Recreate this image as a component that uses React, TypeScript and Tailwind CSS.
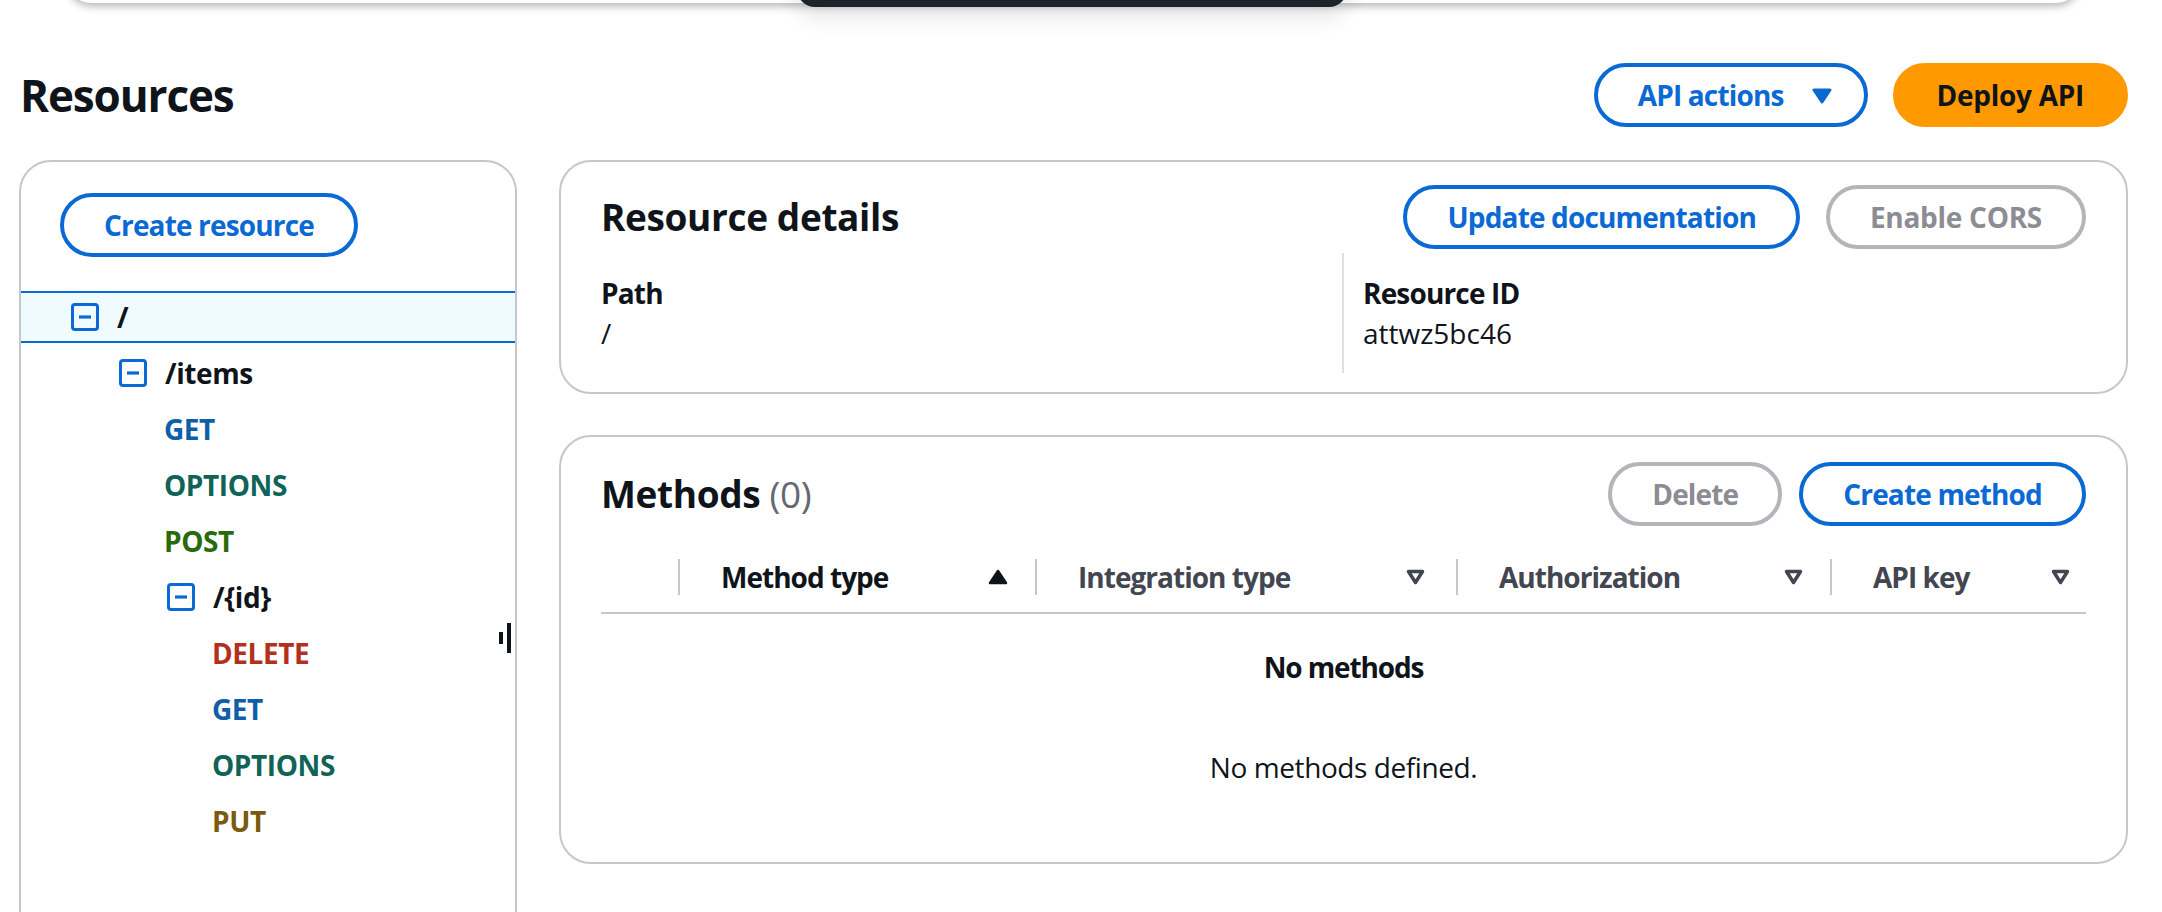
import React from 'react'

type TreeNode = {
    label: string
    depth: number
    expandable?: boolean
    selected?: boolean
    color?: string
}

const tree: TreeNode[] = [
    { label: '/', depth: 0, expandable: true, selected: true },
    { label: '/items', depth: 1, expandable: true },
    { label: 'GET', depth: 2, color: 'text-[#0f5ea8]' },
    { label: 'OPTIONS', depth: 2, color: 'text-[#0f6357]' },
    { label: 'POST', depth: 2, color: 'text-[#2a690c]' },
    { label: '/{id}', depth: 2, expandable: true },
    { label: 'DELETE', depth: 3, color: 'text-[#b2311c]' },
    { label: 'GET', depth: 3, color: 'text-[#0f5ea8]' },
    { label: 'OPTIONS', depth: 3, color: 'text-[#0f6357]' },
    { label: 'PUT', depth: 3, color: 'text-[#7a5a0e]' },
]

const columns = [
    { label: 'Method type', width: 'w-[357px]', sorted: true, pr: 'pr-[27px]' },
    { label: 'Integration type', width: 'w-[421px]', sorted: false, pr: 'pr-[31px]' },
    { label: 'Authorization', width: 'w-[374px]', sorted: false, pr: 'pr-[27px]' },
    { label: 'API key', width: 'flex-1', sorted: false, pr: 'pr-[16px]' },
]

function CollapseIcon() {
    return (
        <svg width="28" height="28" viewBox="0 0 28 28" className="shrink-0">
            <rect x="1.5" y="1.5" width="25" height="25" rx="2.5" fill="none" stroke="#0b69d4" strokeWidth="3" />
            <line x1="8" y1="14" x2="20" y2="14" stroke="#0b69d4" strokeWidth="3.2" />
        </svg>
    )
}

function CaretUpFilled() {
    return (
        <svg width="20" height="16" viewBox="0 0 20 16">
            <path d="M2 14 L10 2 L18 14 Z" fill="#0f141a" stroke="#0f141a" strokeWidth="2.5" strokeLinejoin="round" />
        </svg>
    )
}

function CaretDownOutline() {
    return (
        <svg width="19" height="16" viewBox="0 0 19 16">
            <path d="M2.5 2.5 L16.5 2.5 L9.5 13.5 Z" fill="none" stroke="#424650" strokeWidth="3.5" strokeLinejoin="round" />
        </svg>
    )
}

function CaretDownFilled() {
    return (
        <svg width="22" height="17" viewBox="0 0 22 17">
            <path d="M3 3 L19 3 L11 15 Z" fill="#0b69d4" stroke="#0b69d4" strokeWidth="3" strokeLinejoin="round" />
        </svg>
    )
}

function Button({ children, variant = 'normal', className = '' }: { children: React.ReactNode; variant?: 'normal' | 'primary' | 'disabled'; className?: string }) {
    const styles = {
        normal: 'border-[#0b69d4] text-[#0b69d4] bg-white',
        primary: 'border-[#ff9900] bg-[#ff9900] text-[#0f141a]',
        disabled: 'border-[#b4b4bb] text-[#8c8c94] bg-white',
    }
    return (
        <button className={`h-[64px] rounded-full border-4 px-[40px] text-[28px] font-bold leading-[40px] whitespace-nowrap flex items-center ${styles[variant]} ${className}`}>
            {children}
        </button>
    )
}

export default function App() {
    return (
        <div className="relative h-[912px] overflow-hidden bg-white font-['Open_Sans',sans-serif] text-[#0f141a]">
            {/* floating toolbar cut off at the top of the viewport */}
            <div className="absolute left-[67px] top-[-60px] h-[63px] w-[2013px] rounded-[24px] bg-white shadow-[0_3px_8px_rgba(0,0,0,0.3)]" />
            <div className="absolute left-[797px] top-[-40px] h-[47px] w-[550px] rounded-b-[18px] bg-[#1f232c] shadow-[0_8px_24px_rgba(0,7,22,0.12)]" />

            <div className="pl-[19px] pr-[34px] pt-[63px]">
                <div className="flex h-[64px] items-center justify-between">
                    <h1 className="ml-[1px] text-[44px] font-bold leading-[60px] tracking-[-0.025em]">Resources</h1>
                    <div className="flex items-center gap-[25px]">
                        <Button className="pr-[31px] tracking-[-0.03em]">
                            API actions
                            <span className="ml-[27px] flex"><CaretDownFilled /></span>
                        </Button>
                        <Button variant="primary" className="tracking-[-0.01em]">Deploy API</Button>
                    </div>
                </div>

                <div className="mt-[33px] grid grid-cols-[498px_1fr] gap-[42px]">
                    {/* resource tree */}
                    <div className="relative h-[820px] rounded-[32px] border-2 border-[#c6c6cd]">
                        <div className="pl-[39px] pt-[31px]">
                            <Button className="tracking-[-0.03em]">Create resource</Button>
                        </div>
                        <div className="mt-[34px]">
                            {tree.map((node, i) => (
                                <div
                                    key={i}
                                    className={node.selected
                                        ? 'mb-[2px] flex h-[52px] items-center border-y-2 border-[#0b69d4] bg-[#f0fbff]'
                                        : 'flex h-[56px] items-center'}
                                    style={{ paddingLeft: 50 + node.depth * 48 - (node.expandable ? 0 : 3) }}
                                >
                                    {node.expandable && <CollapseIcon />}
                                    <span className={`text-[28px] font-bold leading-[40px] tracking-[-0.015em] ${node.expandable ? 'ml-[18px]' : ''} ${node.color ?? 'text-[#0f141a]'}`}>
                                        {node.label}
                                    </span>
                                </div>
                            ))}
                        </div>
                        {/* mouse cursor */}
                        <div className="absolute left-[478px] top-[470px] h-[12px] w-[4px] bg-[#0f141a]" />
                        <div className="absolute left-[486px] top-[461px] h-[30px] w-[4px] bg-[#0f141a]" />
                    </div>

                    <div className="flex flex-col gap-[41px]">
                        {/* resource details */}
                        <div className="rounded-[32px] border-2 border-[#c6c6cd] px-[40px] pb-[19px] pt-[23px]">
                            <div className="flex h-[64px] items-center justify-between">
                                <h2 className="text-[37px] font-bold leading-[48px] tracking-[-0.01em]">Resource details</h2>
                                <div className="flex gap-[26px]">
                                    <Button className="tracking-[-0.03em]">Update documentation</Button>
                                    <Button variant="disabled" className="tracking-[-0.01em]">Enable CORS</Button>
                                </div>
                            </div>
                            <div className="mt-[4px] grid grid-cols-[741px_1fr]">
                                <div className="py-[20px]">
                                    <div className="text-[28px] font-bold leading-[40px] tracking-[-0.03em]">Path</div>
                                    <div className="text-[28px] leading-[40px]">/</div>
                                </div>
                                <div className="border-l-2 border-[#dedee3] py-[20px] pl-[19px]">
                                    <div className="text-[28px] font-bold leading-[40px] tracking-[-0.03em]">Resource ID</div>
                                    <div className="text-[28px] leading-[40px]">attwz5bc46</div>
                                </div>
                            </div>
                        </div>

                        {/* methods */}
                        <div className="rounded-[32px] border-2 border-[#c6c6cd] px-[40px] pb-[75px] pt-[25px]">
                            <div className="flex h-[64px] items-center justify-between">
                                <h2 className="text-[37px] font-bold leading-[48px] tracking-[-0.01em]">
                                    Methods <span className="font-normal text-[#656871]">(0)</span>
                                </h2>
                                <div className="flex gap-[17px]">
                                    <Button variant="disabled" className="tracking-[-0.03em]">Delete</Button>
                                    <Button className="tracking-[-0.03em]">Create method</Button>
                                </div>
                            </div>

                            <div className="mt-[15px] flex h-[73px] items-center border-b-2 border-[#c6c6cd]">
                                <div className="w-[77px]" />
                                {columns.map(col => (
                                    <div key={col.label} className={`flex items-center ${col.width}`}>
                                        <span className="h-[36px] w-[2px] bg-[#c6c6cd]" />
                                        <div className={`flex flex-1 items-center justify-between pl-[41px] ${col.pr}`}>
                                            <span className={`text-[28px] font-bold leading-[40px] tracking-[-0.035em] ${col.sorted ? 'text-[#0f141a]' : 'text-[#424650]'}`}>
                                                {col.label}
                                            </span>
                                            {col.sorted ? <CaretUpFilled /> : <CaretDownOutline />}
                                        </div>
                                    </div>
                                ))}
                            </div>

                            <div className="pt-[33px] text-center">
                                <div className="text-[28px] font-bold leading-[40px] tracking-[-0.04em]">No methods</div>
                                <div className="mt-[60px] text-[28px] leading-[40px] tracking-[-0.015em]">No methods defined.</div>
                            </div>
                        </div>
                    </div>
                </div>
            </div>
        </div>
    )
}
